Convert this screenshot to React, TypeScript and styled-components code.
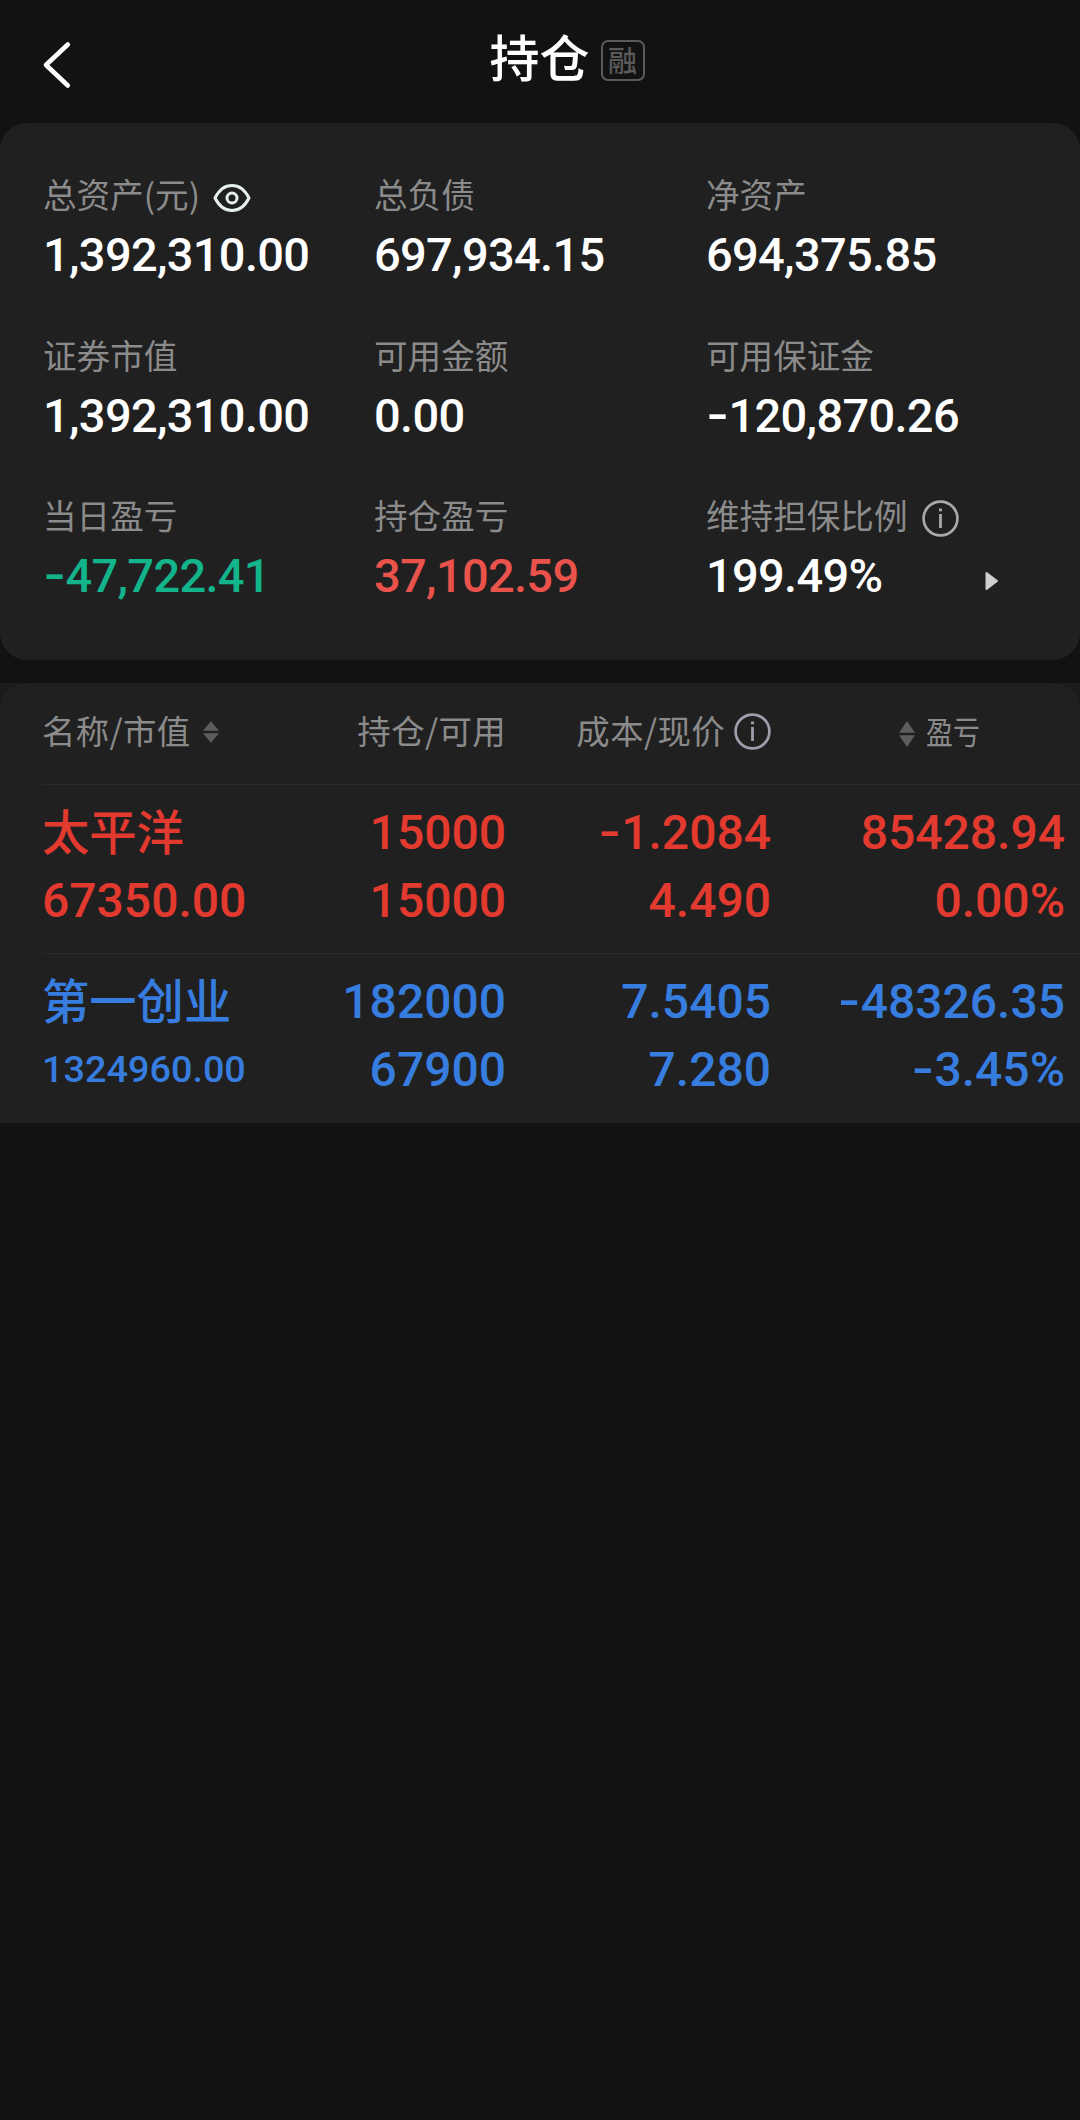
import React from "react";
import styled, { createGlobalStyle } from "styled-components";

const GlobalStyle = createGlobalStyle`
  * { box-sizing: border-box; }
  body {
    margin: 0;
    background: #121212;
    color: #fff;
    font-family: Roboto, "Noto Sans CJK SC", sans-serif;
  }
`;

const CJK = `"Noto Sans CJK SC", sans-serif`;
const RED = "#e33a2f";
const BLUE = "#377cdf";

const Page = styled.main`
  width: 1080px;
  min-height: 2120px;
  display: flex;
  flex-direction: column;
  background: #121212;
`;

const Header = styled.header`
  height: 123px;
  display: grid;
  grid-template-columns: 200px 1fr 200px;
  align-items: center;
`;

const BackButton = styled.button`
  display: flex;
  width: 72px;
  padding: 7px 0 0 40px;
  border: 0;
  background: none;
  svg { flex: none; }
`;

const TitleGroup = styled.div`
  display: flex;
  align-items: center;
  justify-content: center;
  gap: 11px;
  padding-left: 54px;
`;

const Title = styled.h1`
  margin: 0;
  padding-bottom: 13px;
  font: 500 50px/60px ${CJK};
`;

const Badge = styled.span`
  width: 44px;
  height: 41px;
  margin-bottom: 2px;
  border: 2px solid #5a5a5a;
  border-radius: 7px;
  color: #5a5a5a;
  font: 500 29px/35px ${CJK};
  text-align: center;
`;

const Summary = styled.section`
  height: 537px;
  display: grid;
  grid-template-columns: 331px 332px 1fr;
  grid-auto-rows: 110px;
  row-gap: 50.5px;
  padding: 50px 0 0 43px;
  border-radius: 27px;
  background: #202020;
`;

const Metric = styled.div`
  display: flex;
  flex-direction: column;
  gap: 12px;
`;

const MetricLabel = styled.div<{ $gap?: number }>`
  height: 42px;
  display: flex;
  align-items: center;
  gap: ${(p) => p.$gap ?? 14}px;
  color: #8b8b8b;
  font: 400 33.6px/42px ${CJK};
  white-space: nowrap;
  svg { flex: none; margin-top: 7px; }
`;

const MetricValue = styled.div<{ $color?: string }>`
  height: 56px;
  display: flex;
  align-items: center;
  justify-content: space-between;
  padding-right: 81px;
  color: ${(p) => p.$color ?? "#fff"};
  font-weight: 500;
  font-size: 47px;
  line-height: 56px;
  letter-spacing: -0.68px;
  white-space: nowrap;
`;

const Sign = styled.span`
  font-family: Inter, sans-serif;
  font-weight: 500;
  font-size: 50px;
  line-height: 0;
`;

const Holdings = styled.section`
  height: 439.5px;
  margin-top: 23px;
  background: #1b1b1e;
`;

const HoldingsPanel = styled.div`
  height: 100%;
  border-radius: 27px 27px 0 0;
  background: #202020;
`;

const Row = styled.div`
  display: grid;
  grid-template-columns: 233px 231px 265px 294px;
  margin-left: 42px;
`;

const HeadRow = styled(Row)`
  height: 101px;
  padding-bottom: 4px;
  align-items: center;
  color: #8b8b8b;
  font: 400 33.4px/44px ${CJK};
  letter-spacing: 0.4px;
  white-space: nowrap;
`;

const HeadCell = styled.div<{ $end?: boolean; $gap?: number; $inset?: number }>`
  display: flex;
  align-items: center;
  justify-content: ${(p) => (p.$end ? "flex-end" : "flex-start")};
  gap: ${(p) => p.$gap ?? 0}px;
  padding-right: ${(p) => p.$inset ?? 0}px;
  svg { flex: none; }
`;

const HeadText = styled.span`
  padding-bottom: 4px;
`;

const Narrow = styled(HeadText)`
  width: 53px;
  font-size: 32px;
  letter-spacing: 0;
  transform: scaleX(0.84);
  transform-origin: left;
`;

const BodyRow = styled(Row)<{ $color: string }>`
  height: 169px;
  padding-top: 14px;
  border-top: 1px solid #2a2a2a;
  color: ${(p) => p.$color};
`;

const Cell = styled.div<{ $end?: boolean }>`
  display: flex;
  flex-direction: column;
  text-align: ${(p) => (p.$end ? "right" : "left")};
  white-space: nowrap;
`;

const Figure = styled.div<{ $size?: number }>`
  height: 68px;
  font-size: ${(p) => p.$size ?? 48}px;
  font-weight: 500;
  letter-spacing: 0;
  line-height: ${(p) => (p.$size ? 66 : 68)}px;
`;

const Name = styled.div`
  height: 68px;
  font: 500 47.3px/62px ${CJK};
`;

const BackIcon = () => (
  <svg width="32" height="50" viewBox="0 0 32 50" fill="none" stroke="#fff" strokeWidth="4.6" strokeLinecap="round" strokeLinejoin="round">
    <path d="M27.8 4.5 6 25l21.8 20.5" />
  </svg>
);

const EyeIcon = () => (
  <svg width="38" height="30" viewBox="0 0 38 30" fill="none" stroke="#e6eeee" strokeWidth="3">
    <path d="M2 15C6 7 12 2.500 19 2.500S32 7 36 15C32 23 26 27.500 19 27.500S6 23 2 15Z" strokeLinejoin="round" />
    <circle cx="19" cy="15" r="5" />
  </svg>
);

const InfoIcon = ({ color }: { color: string }) => (
  <svg width="37" height="37" viewBox="0 0 37 37" fill="none" stroke={color}>
    <circle cx="18.500" cy="18.500" r="16.900" strokeWidth="2.700" />
    <path d="M18.500 14v14" strokeWidth="2.800" />
    <path d="M18.500 8.500v2.800" strokeWidth="3" />
  </svg>
);

const SortSvg = styled.svg<{ $drop?: number }>`
  margin-top: ${(p) => p.$drop ?? 0}px;
`;

const SortIcon = ({ height, drop }: { height: number; drop?: number }) => (
  <SortSvg $drop={drop} width="16" height={height} viewBox={`0 0 16 ${height}`} fill="#5c5c5c">
    <path d={`M8 0 16 ${height / 2 - 1.2}H0Z`} />
    <path d={`M8 ${height} 16 ${height / 2 + 1.2}H0Z`} />
  </SortSvg>
);

const PlaySvg = styled.svg`
  margin-top: 10px;
`;

const PlayIcon = () => (
  <PlaySvg width="14" height="20" viewBox="0 0 14 20" fill="#d0d0d0" stroke="#d0d0d0" strokeWidth="2" strokeLinejoin="round">
    <path d="M1.500 2v16L12 10Z" />
  </PlaySvg>
);

const Amount = ({ value }: { value: string }) =>
  value.startsWith("-") ? (
    <span>
      <Sign>-</Sign>
      {value.slice(1)}
    </span>
  ) : (
    <span>{value}</span>
  );

type MetricItem = {
  label: string;
  value: string;
  color?: string;
  icon?: React.ReactNode;
  iconGap?: number;
  more?: boolean;
};

const metrics: MetricItem[] = [
  { label: "总资产(元)", value: "1,392,310.00", icon: <EyeIcon />, iconGap: 13 },
  { label: "总负债", value: "697,934.15" },
  { label: "净资产", value: "694,375.85" },
  { label: "证券市值", value: "1,392,310.00" },
  { label: "可用金额", value: "0.00" },
  { label: "可用保证金", value: "-120,870.26" },
  { label: "当日盈亏", value: "-47,722.41", color: "#13b48b" },
  { label: "持仓盈亏", value: "37,102.59", color: "#e9534b" },
  { label: "维持担保比例", value: "199.49%", icon: <InfoIcon color="#a8a8a8" />, iconGap: 15, more: true },
];

const holdings = [
  {
    name: "太平洋",
    market: "67350.00",
    color: RED,
    pairs: [["15000", "15000"], ["-1.2084", "4.490"], ["85428.94", "0.00%"]],
  },
  {
    name: "第一创业",
    market: "1324960.00",
    marketSize: 37.8,
    color: BLUE,
    pairs: [["182000", "67900"], ["7.5405", "7.280"], ["-48326.35", "-3.45%"]],
  },
];

export default function App() {
  return (
    <Page>
      <GlobalStyle />
      <Header>
        <BackButton aria-label="返回">
          <BackIcon />
        </BackButton>
        <TitleGroup>
          <Title>持仓</Title>
          <Badge>融</Badge>
        </TitleGroup>
      </Header>

      <Summary>
        {metrics.map((m) => (
          <Metric key={m.label}>
            <MetricLabel $gap={m.iconGap}>
              {m.label}
              {m.icon}
            </MetricLabel>
            <MetricValue $color={m.color}>
              <Amount value={m.value} />
              {m.more && <PlayIcon />}
            </MetricValue>
          </Metric>
        ))}
      </Summary>

      <Holdings>
        <HoldingsPanel>
          <HeadRow>
            <HeadCell $gap={12}>
              <HeadText>名称/市值</HeadText>
              <SortIcon height={22} />
            </HeadCell>
            <HeadCell $end>
              <HeadText>持仓/可用</HeadText>
            </HeadCell>
            <HeadCell $end $gap={9}>
              <HeadText>成本/现价</HeadText>
              <InfoIcon color="#a09eac" />
            </HeadCell>
            <HeadCell $end $gap={11} $inset={86}>
              <SortIcon height={26} drop={5} />
              <Narrow>盈亏</Narrow>
            </HeadCell>
          </HeadRow>
          {holdings.map((h) => (
            <BodyRow key={h.name} $color={h.color}>
              <Cell>
                <Name>{h.name}</Name>
                <Figure $size={h.marketSize}>{h.market}</Figure>
              </Cell>
              {h.pairs.map(([top, bottom], i) => (
                <Cell key={i} $end>
                  <Figure>
                    <Amount value={top} />
                  </Figure>
                  <Figure>
                    <Amount value={bottom} />
                  </Figure>
                </Cell>
              ))}
            </BodyRow>
          ))}
        </HoldingsPanel>
      </Holdings>
    </Page>
  );
}
